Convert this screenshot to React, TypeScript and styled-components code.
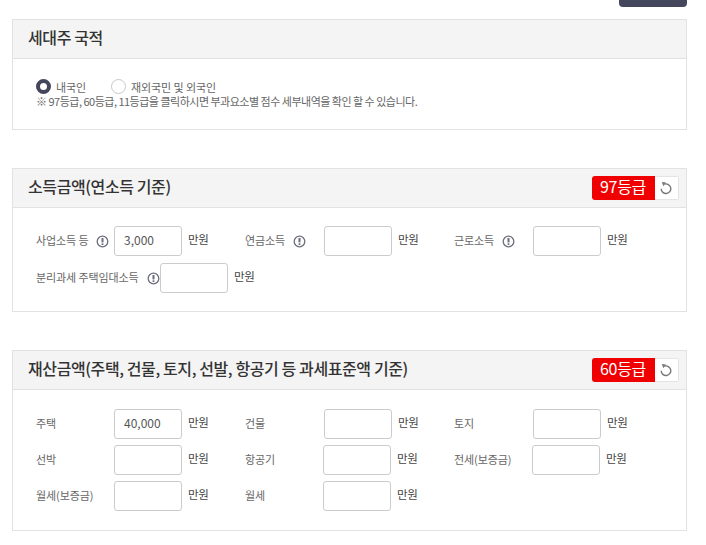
import styled, { createGlobalStyle } from "styled-components";

const GlobalStyle = createGlobalStyle`
  html, body {
    margin: 0;
    padding: 0;
    background: #fff;
    overflow: hidden;
  }
  body {
    font-family: "Noto Sans CJK KR", "Noto Sans", sans-serif;
    color: #333;
  }
`;

const Page = styled.div`
  width: 706px;
  height: 545px;
  padding: 0 19.5px 0 12px;
  box-sizing: border-box;
  overflow: hidden;
`;

const TopBar = styled.div`
  display: flex;
  justify-content: flex-end;
  height: 19px;
`;

const TopButton = styled.div`
  width: 68px;
  height: 7px;
  background: #44465c;
  border-radius: 0 0 4px 4px;
`;

const Panel = styled.section`
  border: 1px solid #e2e2e2;
  margin-bottom: 38px;
  box-sizing: border-box;
`;

const PanelHeader = styled.header`
  display: flex;
  align-items: center;
  justify-content: space-between;
  height: 38px;
  padding: 0 7px 0 15px;
  background: #f4f4f4;
  border-bottom: 1px solid #e2e2e2;
`;

const PanelTitle = styled.h3`
  margin: 0;
  position: relative;
  top: -2px;
  font-size: 16px;
  font-weight: 500;
  letter-spacing: -0.4px;
  color: #333;
`;

const GradeGroup = styled.div`
  display: flex;
`;

const GradeBadge = styled.span`
  display: flex;
  align-items: center;
  justify-content: center;
  width: 63px;
  height: 24px;
  padding-bottom: 4px;
  box-sizing: border-box;
  background: #f00000;
  border-radius: 3px 0 0 3px;
  color: #fff;
  font-size: 16px;
  letter-spacing: -0.3px;
`;

const ResetButton = styled.button`
  display: flex;
  align-items: center;
  justify-content: center;
  width: 24px;
  height: 24px;
  padding: 0;
  background: #fff;
  border: 1px solid #e4e4e4;
  border-left: 0;
  border-radius: 0 2px 2px 0;
`;

const NationBody = styled.div`
  padding: 19px 23px 19px;
  height: 32px;
`;

const RadioRow = styled.div`
  display: flex;
  align-items: center;
  height: 17px;
  gap: 25px;
`;

const RadioOption = styled.label`
  display: flex;
  align-items: center;
  gap: 5px;
  font-size: 11px;
  letter-spacing: -0.1px;
  color: #666;
`;

const RadioDot = styled.span<{ $checked?: boolean }>`
  width: 15px;
  height: 15px;
  box-sizing: border-box;
  border-radius: 50%;
  background: #fff;
  border: ${(p) => (p.$checked ? "4px solid #44465c" : "1px solid #c8c8c8")};
`;

const Notice = styled.p`
  margin: 0;
  position: relative;
  top: -1px;
  font-size: 11px;
  line-height: 14px;
  letter-spacing: -0.5px;
  color: #666;
  white-space: nowrap;
`;

const FieldGrid = styled.div<{ $gap: number; $pad: number }>`
  display: grid;
  grid-template-columns: repeat(3, 209px);
  row-gap: ${(p) => p.$gap}px;
  padding: ${(p) => p.$pad}px 23px;
`;

const Field = styled.div`
  display: flex;
  align-items: center;
`;

const FieldLabel = styled.label<{ $width: number }>`
  display: flex;
  align-items: center;
  width: ${(p) => p.$width}px;
  flex-shrink: 0;
  white-space: nowrap;
  position: relative;
  top: -1px;
  font-size: 11px;
  letter-spacing: -0.1px;
  color: #666;
`;

const Hint = styled.svg`
  margin-left: 8px;
  flex-shrink: 0;
  position: relative;
  top: 1px;
`;

const AmountInput = styled.input`
  width: 68px;
  height: 30px;
  box-sizing: border-box;
  padding: 0 9px 3px;
  border: 1px solid #ccc;
  border-radius: 3px;
  background: #fff;
  font-family: inherit;
  font-size: 12px;
  color: #555;
  outline: none;
`;

const Unit = styled.span`
  margin-left: 6px;
  position: relative;
  top: -2px;
  white-space: nowrap;
  font-size: 11.5px;
  letter-spacing: -0.3px;
  color: #444;
`;

function HintIcon() {
  return (
    <Hint width="13" height="13" viewBox="0 0 13 13">
      <circle cx="6.5" cy="6.5" r="5.3" fill="none" stroke="#6b6d7c" strokeWidth="1.3" />
      <rect x="5.5" y="3" width="2" height="4.4" fill="#6b6d7c" />
      <rect x="5.6" y="8.3" width="1.8" height="1.7" fill="#6b6d7c" />
    </Hint>
  );
}

function ResetIcon() {
  return (
    <svg width="14" height="14" viewBox="0 0 14 14" fill="none">
      <path d="M5.4 3.2 A4.8 4.8 0 1 1 2.2 7.8" stroke="#777" strokeWidth="1.4" />
      <path d="M2.8 1 L7 1.6 L4.4 5.2 Z" fill="#777" />
    </svg>
  );
}

function Grade({ value }: { value: string }) {
  return (
    <GradeGroup>
      <GradeBadge>{value}</GradeBadge>
      <ResetButton type="button">
        <ResetIcon />
      </ResetButton>
    </GradeGroup>
  );
}

interface IAmountFieldProps {
  label: string;
  value?: string;
  hint?: boolean;
  width?: number;
}

function AmountField({ label, value, hint, width = 78 }: IAmountFieldProps) {
  return (
    <Field>
      <FieldLabel $width={width}>
        {label}
        {hint && <HintIcon />}
      </FieldLabel>
      <AmountInput defaultValue={value} />
      <Unit>만원</Unit>
    </Field>
  );
}

export default function App() {
  return (
    <>
      <GlobalStyle />
      <Page>
        <TopBar>
          <TopButton />
        </TopBar>

        <Panel>
          <PanelHeader>
            <PanelTitle>세대주 국적</PanelTitle>
          </PanelHeader>
          <NationBody>
            <RadioRow>
              <RadioOption>
                <RadioDot $checked />
                내국인
              </RadioOption>
              <RadioOption>
                <RadioDot />
                재외국민 및 외국인
              </RadioOption>
            </RadioRow>
            <Notice>※ 97등급, 60등급, 11등급을 클릭하시면 부과요소별 점수 세부내역을 확인 할 수 있습니다.</Notice>
          </NationBody>
        </Panel>

        <Panel>
          <PanelHeader>
            <PanelTitle>소득금액(연소득 기준)</PanelTitle>
            <Grade value="97등급" />
          </PanelHeader>
          <FieldGrid $gap={7} $pad={18}>
            <AmountField label="사업소득 등" value="3,000" hint />
            <AmountField label="연금소득" hint width={79} />
            <AmountField label="근로소득" hint width={79} />
            <AmountField label="분리과세 주택임대소득" hint width={124} />
          </FieldGrid>
        </Panel>

        <Panel>
          <PanelHeader>
            <PanelTitle>재산금액(주택, 건물, 토지, 선발, 항공기 등 과세표준액 기준)</PanelTitle>
            <Grade value="60등급" />
          </PanelHeader>
          <FieldGrid $gap={6} $pad={19}>
            <AmountField label="주택" value="40,000" />
            <AmountField label="건물" width={79} />
            <AmountField label="토지" width={79} />
            <AmountField label="선박" />
            <AmountField label="항공기" />
            <AmountField label="전세(보증금)" />
            <AmountField label="월세(보증금)" />
            <AmountField label="월세" />
          </FieldGrid>
        </Panel>
      </Page>
    </>
  );
}
